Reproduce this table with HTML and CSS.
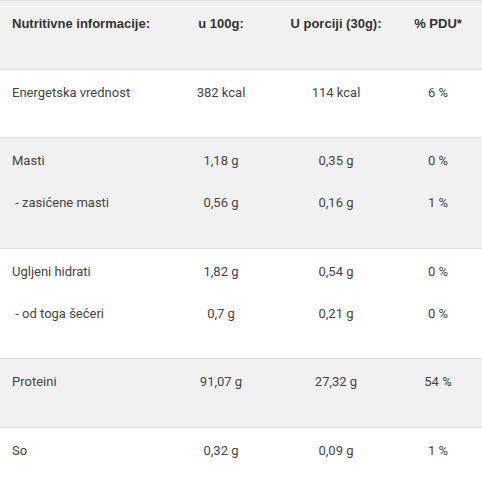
FILE: index.html
```html
<!DOCTYPE html>
<html lang="sr">
<head>
<meta charset="utf-8">
<title>Nutritivne informacije</title>
<link rel="stylesheet" href="styles.css">
</head>
<body>
<table class="nutri">
  <colgroup>
    <col class="c1"><col class="c2"><col class="c3"><col class="c4">
  </colgroup>
  <thead>
    <tr class="alt">
      <th class="name">Nutritivne informacije:</th>
      <th>u 100g:</th>
      <th>U porciji (30g):</th>
      <th>% PDU*</th>
    </tr>
  </thead>
  <tbody>
    <tr>
      <td class="name">Energetska vrednost</td>
      <td>382 kcal</td>
      <td>114 kcal</td>
      <td>6 %</td>
    </tr>
    <tr class="alt">
      <td class="name"><div>Masti</div><div class="sub">&nbsp;- zasićene masti</div></td>
      <td><div>1,18 g</div><div class="sub">0,56 g</div></td>
      <td><div>0,35 g</div><div class="sub">0,16 g</div></td>
      <td><div>0 %</div><div class="sub">1 %</div></td>
    </tr>
    <tr>
      <td class="name"><div>Ugljeni hidrati</div><div class="sub">&nbsp;- od toga šećeri</div></td>
      <td><div>1,82 g</div><div class="sub">0,7 g</div></td>
      <td><div>0,54 g</div><div class="sub">0,21 g</div></td>
      <td><div>0 %</div><div class="sub">0 %</div></td>
    </tr>
    <tr class="alt">
      <td class="name">Proteini</td>
      <td>91,07 g</td>
      <td>27,32 g</td>
      <td>54 %</td>
    </tr>
    <tr>
      <td class="name">So</td>
      <td>0,32 g</td>
      <td>0,09 g</td>
      <td>1 %</td>
    </tr>
  </tbody>
</table>
</body>
</html>
```
FILE: styles.css
```css
html, body {
  margin: 0;
  padding: 0;
  background: #ffffff;
}

.nutri {
  width: 482px;
  border-collapse: collapse;
  table-layout: fixed;
  font-family: Roboto, "Liberation Sans", sans-serif;
  font-size: 13px;
  line-height: 21px;
  color: #444444;
}

.c1 { width: 164px; }
.c2 { width: 114px; }
.c3 { width: 116px; }
.c4 { width: 88px; }

.nutri tr {
  border-top: 1px solid #dddddd;
}

.nutri tr.alt {
  background: #f1f1f1;
}

.nutri th,
.nutri td {
  padding: 12px 12px 34.5px;
  text-align: center;
  vertical-align: top;
  white-space: nowrap;
}

.nutri th {
  font-family: "Liberation Sans", Arial, sans-serif;
  font-weight: bold;
  color: #333333;
}

.nutri .name {
  text-align: left;
}

.sub {
  margin-top: 21px;
}
```
